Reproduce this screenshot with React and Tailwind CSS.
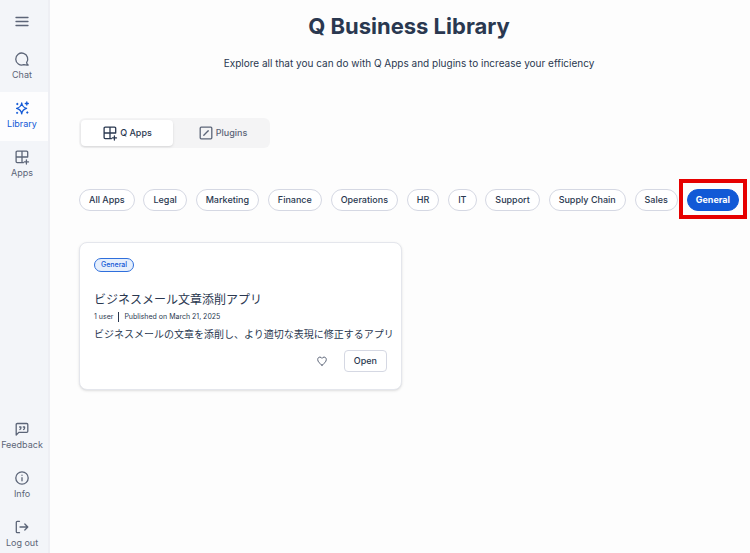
import React from "react";

const strokeProps = {
  fill: "none",
  stroke: "currentColor",
  strokeWidth: 1.3,
  strokeLinecap: "round",
  strokeLinejoin: "round",
  "aria-hidden": true,
};

function MenuIcon() {
  return (
    <svg className="h-4 w-4" viewBox="0 0 16 16" {...strokeProps}>
      <path d="M2 3.500h12M2 7.500h12M2 11.500h12" />
    </svg>
  );
}

function ChatIcon() {
  return (
    <svg className="h-4 w-4" viewBox="0 0 16 16" {...strokeProps}>
      <path d="M12.600 11.600A6 6 0 1 0 9.800 13.700c1.200.4 2.800.5 4.400.4-.9-.6-1.400-1.500-1.600-2.500z" />
    </svg>
  );
}

function SparklesIcon() {
  return (
    <svg className="h-4 w-4" viewBox="0 0 16 16" {...strokeProps}>
      <path d="M7.700 3c.5 3.200 1.800 4.600 4.900 5.400-3.100.8-4.400 2.200-4.900 5.400-.5-3.200-1.800-4.600-5.100-5.400C5.900 7.600 7.200 6.200 7.700 3z" />
      <path d="M12.800 2v3M11.300 3.500h3M3.300 3.500v1M2.800 4h1M3.100 12.300v1M2.600 12.800h1M13.300 12v1M12.800 12.500h1" />
    </svg>
  );
}

function AppsIcon() {
  return (
    <svg className="h-4 w-4" viewBox="0 0 16 16" {...strokeProps}>
      <path d="M13.700 8V3.200c0-.7-.4-1.100-1.100-1.100H3.200c-.7 0-1.100.4-1.100 1.100v9.400c0 .7.4 1.100 1.100 1.100H8V2.100M2.100 8h11.600M8 13.700h1.300M12.400 10.800v4.200M10.300 12.900h4.200" />
    </svg>
  );
}

function PluginsIcon() {
  return (
    <svg className="h-4 w-4" viewBox="0 0 16 16" {...strokeProps}>
      <rect x="2.200" y="2.200" width="11.600" height="11.600" rx="1" />
      <path d="M5.800 10.200l4.400-4.400" />
    </svg>
  );
}

function FeedbackIcon() {
  return (
    <svg className="h-4 w-4" viewBox="0 0 16 16" {...strokeProps}>
      <path d="M2.200 14V3.600c0-.7.4-1.100 1.100-1.100h9.400c.7 0 1.100.4 1.100 1.100v6.700c0 .7-.4 1.100-1.100 1.100H4.800z" />
      <path d="M5.600 6h1.300v.9c0 .8-.4 1.300-1 1.600M9.300 6h1.300v.9c0 .8-.4 1.300-1 1.600" />
    </svg>
  );
}

function InfoIcon() {
  return (
    <svg className="h-4 w-4" viewBox="0 0 16 16" {...strokeProps}>
      <circle cx="8" cy="8" r="6.200" />
      <path d="M8 7.700v3.100M8 5.200v.1" />
    </svg>
  );
}

function LogoutIcon() {
  return (
    <svg className="h-4 w-4" viewBox="0 0 16 16" {...strokeProps}>
      <path d="M5.500 2.300H3.300c-.6 0-1 .4-1 1v9.400c0 .6.400 1 1 1h2.200M6 8h7.700M10.800 5l3 3-3 3" />
    </svg>
  );
}

function HeartIcon() {
  return (
    <svg className="h-3 w-3" viewBox="0 0 12 12" {...strokeProps} strokeWidth={1}>
      <path d="M6 10.200C3.900 8.700 1.700 6.700 1.700 4.500c0-1.400 1-2.400 2.200-2.400.9 0 1.700.5 2.100 1.300.4-.8 1.200-1.300 2.100-1.300 1.200 0 2.200 1 2.200 2.400 0 2.200-2.200 4.200-4.300 5.700z" />
    </svg>
  );
}

function NavItem({ icon, label, active }) {
  return (
    <a
      href="#"
      aria-current={active ? "page" : undefined}
      className={
        "flex h-[49px] shrink-0 flex-col items-center gap-0.5 pt-2 pr-1 text-[9px] leading-[11px] " +
        (active ? "bg-[#fdfdfe] text-[#1259d6]" : "text-[#5c6578]")
      }
    >
      {icon}
      <span>{label}</span>
    </a>
  );
}

const categories = [
  "All Apps",
  "Legal",
  "Marketing",
  "Finance",
  "Operations",
  "HR",
  "IT",
  "Support",
  "Supply Chain",
  "Sales",
];

export default function App() {
  return (
    <div className="flex h-screen overflow-hidden bg-[#fdfdfd] font-['Inter','Noto_Sans_CJK_JP',sans-serif] text-[#2a3850]">
      <aside className="flex w-[50px] shrink-0 flex-col border-r-2 border-[#eeeff4] bg-[#f3f5f9]">
        <button
          type="button"
          aria-label="Menu"
          className="flex h-[43px] shrink-0 items-center justify-center pr-1 text-[#5c6578]"
        >
          <MenuIcon />
        </button>
        <nav>
          <NavItem icon={<ChatIcon />} label="Chat" />
          <NavItem icon={<SparklesIcon />} label="Library" active />
          <NavItem icon={<AppsIcon />} label="Apps" />
        </nav>
        <nav className="mt-auto -mb-[7px]">
          <NavItem icon={<FeedbackIcon />} label="Feedback" />
          <NavItem icon={<InfoIcon />} label="Info" />
          <NavItem icon={<LogoutIcon />} label="Log out" />
        </nav>
      </aside>

      <main className="min-w-0 flex-1 pt-3 pr-[11px] pl-[29px]">
        <h1 className="text-center text-[22px] leading-7 font-bold">Q Business Library</h1>
        <p className="mt-4 text-center text-[10px] leading-[14px]">
          Explore all that you can do with Q Apps and plugins to increase your efficiency
        </p>

        <div className="mt-12 flex h-[30px] w-[191px] rounded-md bg-[#f4f4f5] p-0.5 text-[9px] font-medium">
          <button
            type="button"
            className="flex w-[92px] items-center justify-center gap-0.5 rounded bg-white shadow-sm"
          >
            <AppsIcon />
            Q Apps
          </button>
          <button
            type="button"
            className="flex flex-1 items-center justify-center gap-0.5 pl-1 text-[#5c6578]"
          >
            <PluginsIcon />
            Plugins
          </button>
        </div>

        <div className="mt-[41px] flex justify-between text-[9px] font-medium whitespace-nowrap">
          {categories.map((name) => (
            <button
              key={name}
              type="button"
              className="h-[22px] rounded-full border border-[#d5d8e3] bg-white px-[9px]"
            >
              {name}
            </button>
          ))}
          <div className="relative">
            <button
              type="button"
              aria-pressed="true"
              className="h-[22px] rounded-full border border-[#1259d6] bg-[#1259d6] px-2 font-bold text-white"
            >
              General
            </button>
            <div className="pointer-events-none absolute -inset-x-2 -top-2.5 -bottom-2 border-4 border-[#e60000]" />
          </div>
        </div>

        <div className="mt-[31px] grid grid-cols-2 gap-3.5">
          <article className="rounded-lg border border-[#e4e6ec] bg-white px-3.5 pt-[15px] pb-[17px] shadow-sm">
            <span className="block h-3.5 w-fit rounded-full border border-[#2f6fdc] bg-[#e6effc] px-1.5 text-[7px] leading-[11px] font-medium text-[#1259d6]">
              General
            </span>
            <h2 className="mt-[18px] text-[12px] leading-5">ビジネスメール文章添削アプリ</h2>
            <div className="mt-0.5 flex items-center text-[7px] leading-[10px]">
              <span className="border-r border-[#2a3850] pr-[5px]">1 user</span>
              <span className="pl-[5px]">Published on March 21, 2025</span>
            </div>
            <p className="mt-1 text-[10px] leading-4 whitespace-nowrap">
              ビジネスメールの文章を添削し、より適切な表現に修正するアプリ
            </p>
            <div className="mt-2 flex items-center justify-end gap-4">
              <button type="button" aria-label="Favorite" className="text-[#5c6578]">
                <HeartIcon />
              </button>
              <button
                type="button"
                className="h-[22px] rounded border border-[#d5d8e3] bg-white px-[9px] text-[9px] font-medium"
              >
                Open
              </button>
            </div>
          </article>
        </div>
      </main>
    </div>
  );
}
